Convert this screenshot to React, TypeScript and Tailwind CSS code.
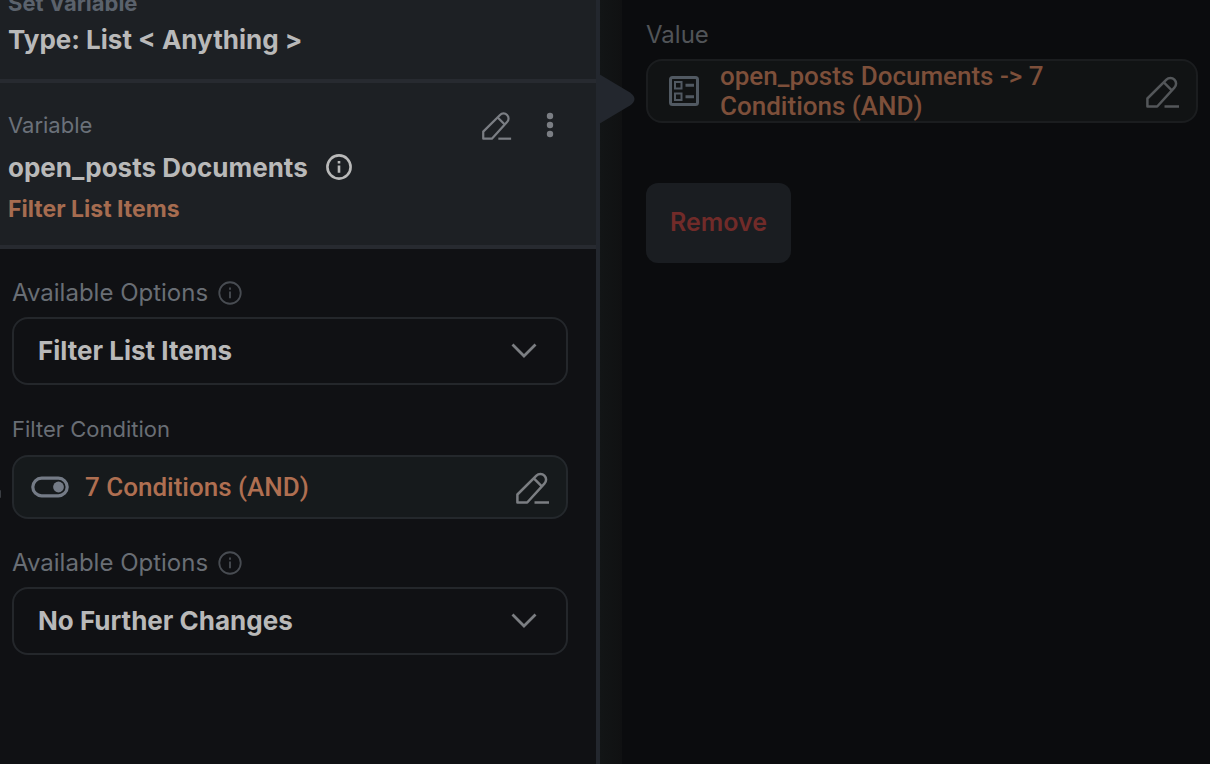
import { useState } from 'react';
import type { ReactNode } from 'react';

const OPTIONS = ['Filter List Items', 'No Further Changes'];

function PencilIcon({ className }: { className?: string }) {
  return (
    <svg viewBox="1 -2 34 34" fill="none" stroke="currentColor" strokeWidth="2.5" className={className}>
      <path d="M2.4 30.5v-8L21.4 3.6a5.6 5.6 0 0 1 8 0 5.6 5.6 0 0 1 0 8L12.2 30.5H2.4Z" strokeLinejoin="round" />
      <path d="M18.8 6.4l8 8" />
      <path d="M19.5 30.5h14.5" />
    </svg>
  );
}

function InfoIcon({ className, strokeWidth = 2 }: { className?: string; strokeWidth?: number }) {
  return (
    <svg viewBox="0 0 26 26" fill="none" stroke="currentColor" strokeWidth={strokeWidth} className={className}>
      <circle cx="13" cy="13" r="11.6" />
      <path d="M13 11.4v7.4M13 7v2.6" />
    </svg>
  );
}

function MoreIcon({ className }: { className?: string }) {
  return (
    <svg viewBox="0 0 8 26" fill="currentColor" className={className}>
      <circle cx="4" cy="4" r="3.2" />
      <circle cx="4" cy="13" r="3.2" />
      <circle cx="4" cy="22" r="3.2" />
    </svg>
  );
}

function ToggleIcon({ className }: { className?: string }) {
  return (
    <svg viewBox="0 0 38 22" fill="none" className={className}>
      <rect x="1.8" y="2.2" width="34.4" height="17.6" rx="8.8" stroke="currentColor" strokeWidth="3.2" />
      <circle cx="27.5" cy="11" r="5.4" fill="currentColor" />
    </svg>
  );
}

function BallotIcon({ className }: { className?: string }) {
  return (
    <svg viewBox="0 0 30 30" fill="none" stroke="currentColor" className={className}>
      <rect x="1.5" y="1.5" width="27" height="27" rx="2" strokeWidth="3" />
      <rect x="6" y="6" width="6.5" height="6.5" strokeWidth="2" />
      <rect x="6" y="17.5" width="6.5" height="6.5" strokeWidth="2" />
      <path d="M16.5 9.3h8.5M16.5 20.8h8.5" strokeWidth="3" />
    </svg>
  );
}

function OptionSelect({ id, initial }: { id: string; initial: string }) {
  const [value, setValue] = useState(initial);

  return (
    <div className="mb-7">
      <div className="mb-2 flex h-8 items-center gap-[10px] text-[#696e75]">
        <label htmlFor={id} className="text-2xl">Available Options</label>
        <InfoIcon className="size-6 text-[#484c52]" />
      </div>
      <div className="relative">
        <select
          id={id}
          value={value}
          onChange={(e) => setValue(e.target.value)}
          className="h-17 w-full appearance-none rounded-2xl border-2 border-[#24272b] bg-[#101114] px-6 pb-0.5 text-[26px] font-bold text-[#b9b9b9] focus:outline-none"
        >
          {OPTIONS.map((o) => (
            <option key={o}>{o}</option>
          ))}
        </select>
        <svg
          viewBox="0 0 26 16"
          fill="none"
          stroke="currentColor"
          strokeWidth="2.8"
          className="pointer-events-none absolute top-[25px] right-[31px] h-4 w-[26px] text-[#7b7e82]"
        >
          <path d="M1.5 2.5L13 14 24.5 2.5" />
        </svg>
      </div>
    </div>
  );
}

function ValueBox({ icon, className, children }: { icon: ReactNode; className: string; children: ReactNode }) {
  return (
    <div className={`flex h-16 items-center rounded-2xl border-2 pr-4 ${className}`}>
      {icon}
      <span className="flex-1 font-[Roboto] text-[26px] leading-[30px] font-medium">{children}</span>
      <button type="button" aria-label="Edit" className="ml-6">
        <PencilIcon className="size-[34px]" />
      </button>
    </div>
  );
}

function VariablePanel() {
  return (
    <section className="relative border-r-4 border-[#23272e] bg-[#101114]">
      <header className="-mt-3 border-b-4 border-[#272a30] bg-[#1d2024] pb-[19px] pl-2">
        <p className="h-8 text-[22px] leading-[30px] font-bold text-[#5b626c]">Set Variable</p>
        <h2 className="h-10 text-[26px] leading-10 font-bold text-[#b9b9b9]">Type: List &lt; Anything &gt;</h2>
      </header>

      <div className="border-b-4 border-[#272a30] bg-[#1d2024] pt-6 pr-[42px] pb-[18px] pl-2">
        <div className="flex h-9 items-center text-[#7b7e84]">
          <span className="flex-1 text-[22px] text-[#6b717a]">Variable</span>
          <button type="button" aria-label="Edit variable">
            <PencilIcon className="size-[30px]" />
          </button>
          <button type="button" aria-label="More" className="ml-[34px]">
            <MoreIcon className="h-[26px] w-2" />
          </button>
        </div>
        <div className="mt-1 flex h-10 items-center gap-[18px] text-[#b9b9b9]">
          <h3 className="text-[26px] font-bold">open_posts Documents</h3>
          <InfoIcon className="size-[26px]" strokeWidth={2.6} />
        </div>
        <p className="mt-1 h-9 text-[23px] leading-9 font-bold text-[#a66c50]">Filter List Items</p>
      </div>

      <div className="pt-7 pr-7 pl-3">
        <OptionSelect id="list-option" initial="Filter List Items" />
        <div className="mb-7">
          <p className="mb-[10px] h-8 text-[22px] leading-8 text-[#696e75]">Filter Condition</p>
          <ValueBox
            icon={<ToggleIcon className="mr-4 ml-[17px] h-[22px] w-[38px] text-[#747b86]" />}
            className="border-[#24282c] bg-[#161a1c] text-[#7b7e82] [&>span]:text-[#af6f51]"
          >
            7 Conditions (AND)
          </ValueBox>
        </div>
        <OptionSelect id="next-option" initial="No Further Changes" />
      </div>

      {/* edge of the drag handle that sits off the left side */}
      <span className="absolute top-[490px] left-0 h-2 w-px rounded-r-full bg-[#3a3d42]" />

      <svg viewBox="0 0 36 50" className="absolute top-[74px] -right-[39px] h-[50px] w-9 text-[#23272e]">
        <path d="M0 0L31 18.5Q40 25 31 31.5L0 50Z" fill="currentColor" />
      </svg>
    </section>
  );
}

function ValuePanel() {
  return (
    <section className="flex bg-[#0b0c0e]">
      <div className="w-[22px] bg-linear-to-r from-[#121516] to-[#101112]" />
      <div className="flex-1 pt-[18px] pr-3 pl-6">
        <p className="mb-[9px] h-8 text-2xl leading-[34px] text-[#515458]">Value</p>
        <ValueBox
          icon={<BallotIcon className="mr-[21px] ml-[21px] size-[30px] text-[#515962]" />}
          className="border-[#1b1d1f] bg-[#111314] text-[#54575a] [&>span]:text-[#7d4f3a]"
        >
          open_posts Documents -&gt; 7 Conditions (AND)
        </ValueBox>
        <button type="button" className="mt-15 h-20 rounded-xl bg-[#1a1d21] px-6 text-[25px] font-semibold text-[#712b29]">
          Remove
        </button>
      </div>
    </section>
  );
}

export default function App() {
  return (
    <main className="grid min-h-screen grid-cols-[60fr_61fr] overflow-hidden bg-[#0b0c0e] font-[Inter,sans-serif]">
      <VariablePanel />
      <ValuePanel />
    </main>
  );
}
